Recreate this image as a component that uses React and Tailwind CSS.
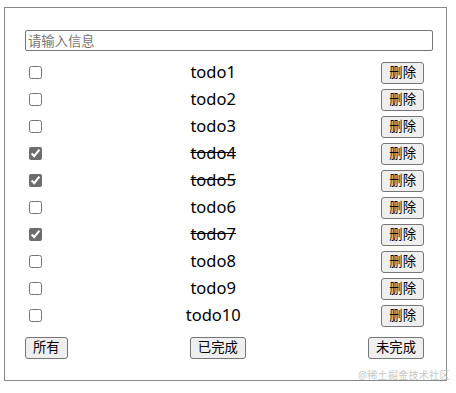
import { useState } from "react";

const initialTodos = [
  { id: 1, title: "todo1", done: false },
  { id: 2, title: "todo2", done: false },
  { id: 3, title: "todo3", done: false },
  { id: 4, title: "todo4", done: true },
  { id: 5, title: "todo5", done: true },
  { id: 6, title: "todo6", done: false },
  { id: 7, title: "todo7", done: true },
  { id: 8, title: "todo8", done: false },
  { id: 9, title: "todo9", done: false },
  { id: 10, title: "todo10", done: false },
];

const btn =
  "h-[22px] px-[7px] bg-[#efefef] border border-[#767676] rounded-[3px] text-[13.33px] leading-none text-black";

export default function App() {
  const [todos, setTodos] = useState(initialTodos);

  const toggle = (id) =>
    setTodos(todos.map((t) => (t.id === id ? { ...t, done: !t.done } : t)));
  const remove = (id) => setTodos(todos.filter((t) => t.id !== id));

  return (
    <div
      className="relative w-[456px] h-[393px] bg-white"
      style={{ fontFamily: '"Segoe UI", "Noto Sans", "Noto Sans CJK SC", sans-serif' }}
    >
      <div className="absolute left-[4px] top-[7px] w-[443px] h-[374px] border border-[#8a8a8a]">
        <div className="pl-[20px] pt-[22px] pr-[21px]">
          {/* Input */}
          <input
            className="block w-[408px] h-[21px] px-[2px] border border-[#767676] rounded-[2px] text-[13.33px] placeholder:text-[#757575] outline-none"
            placeholder="请输入信息"
          />

          {/* List */}
          <ul className="mt-[8px] w-[399px]">
            {todos.map((t) => (
              <li key={t.id} className="flex items-center h-[27px]">
                <input
                  type="checkbox"
                  checked={t.done}
                  onChange={() => toggle(t.id)}
                  className="w-[13px] h-[13px] ml-[4px] mr-[3px] accent-[#6d6d6d]"
                />
                <span
                  className={
                    "flex-1 text-center text-[16.5px] text-black " +
                    (t.done ? "line-through" : "")
                  }
                >
                  {t.title}
                </span>
                <button className={btn} onClick={() => remove(t.id)}>
                  删除
                </button>
              </li>
            ))}
          </ul>

          {/* Filters */}
          <div className="mt-[8px] w-[399px] flex items-center justify-between">
            <button className={btn}>所有</button>
            <button className={btn}>已完成</button>
            <button className={btn}>未完成</button>
          </div>
        </div>
      </div>
      <span className="absolute left-[358px] top-[368px] text-[10px] text-[#c8c8c8] tracking-[0.3px]">
        @稀土掘金技术社区
      </span>
    </div>
  );
}
